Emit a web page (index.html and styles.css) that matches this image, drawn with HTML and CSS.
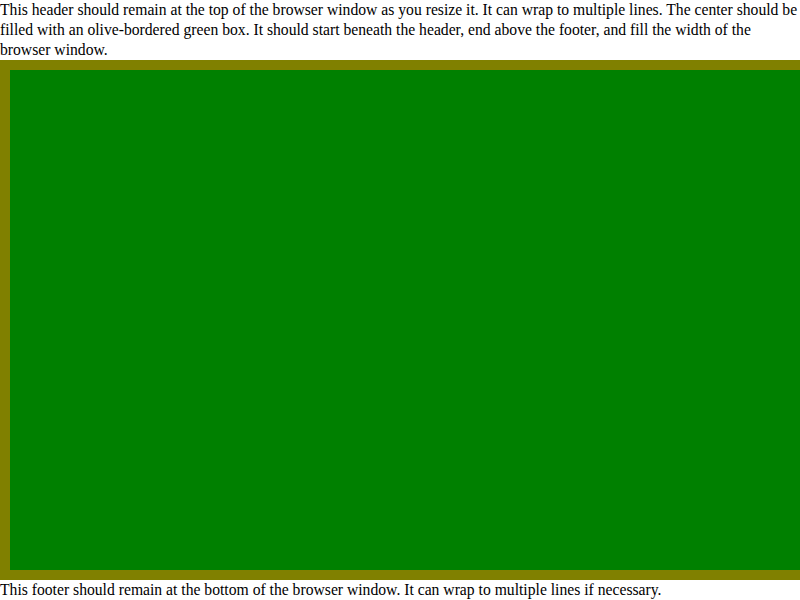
FILE: index.html
```html
<!DOCTYPE html>
<html>
<head>
<meta charset="utf-8">
<link rel="stylesheet" href="styles.css">
</head>
<body>
<div class="page">
  <header class="header">This header should remain at the top of the browser window as you resize it. It can wrap to multiple lines. The center should be filled with an olive-bordered green box. It should start beneath the header, end above the footer, and fill the width of the browser window.</header>
  <main class="center"><div class="box"></div></main>
  <footer class="footer">This footer should remain at the bottom of the browser window. It can wrap to multiple lines if necessary.</footer>
</div>
</body>
</html>
```

FILE: styles.css
```css
html, body {
  margin: 0;
  padding: 0;
  overflow: hidden;
}
body {
  font-family: "Liberation Serif", "Times New Roman", serif;
  font-size: 15.66px;
  line-height: 20px;
  color: #000;
}
.page {
  display: flex;
  flex-direction: column;
  height: 100vh;
}
.center {
  flex: 1;
  display: flex;
  min-height: 0;
}
.box {
  box-sizing: content-box;
  width: 100%;
  flex-shrink: 0;
  border: 10px solid olive;
  background: green;
}
```
